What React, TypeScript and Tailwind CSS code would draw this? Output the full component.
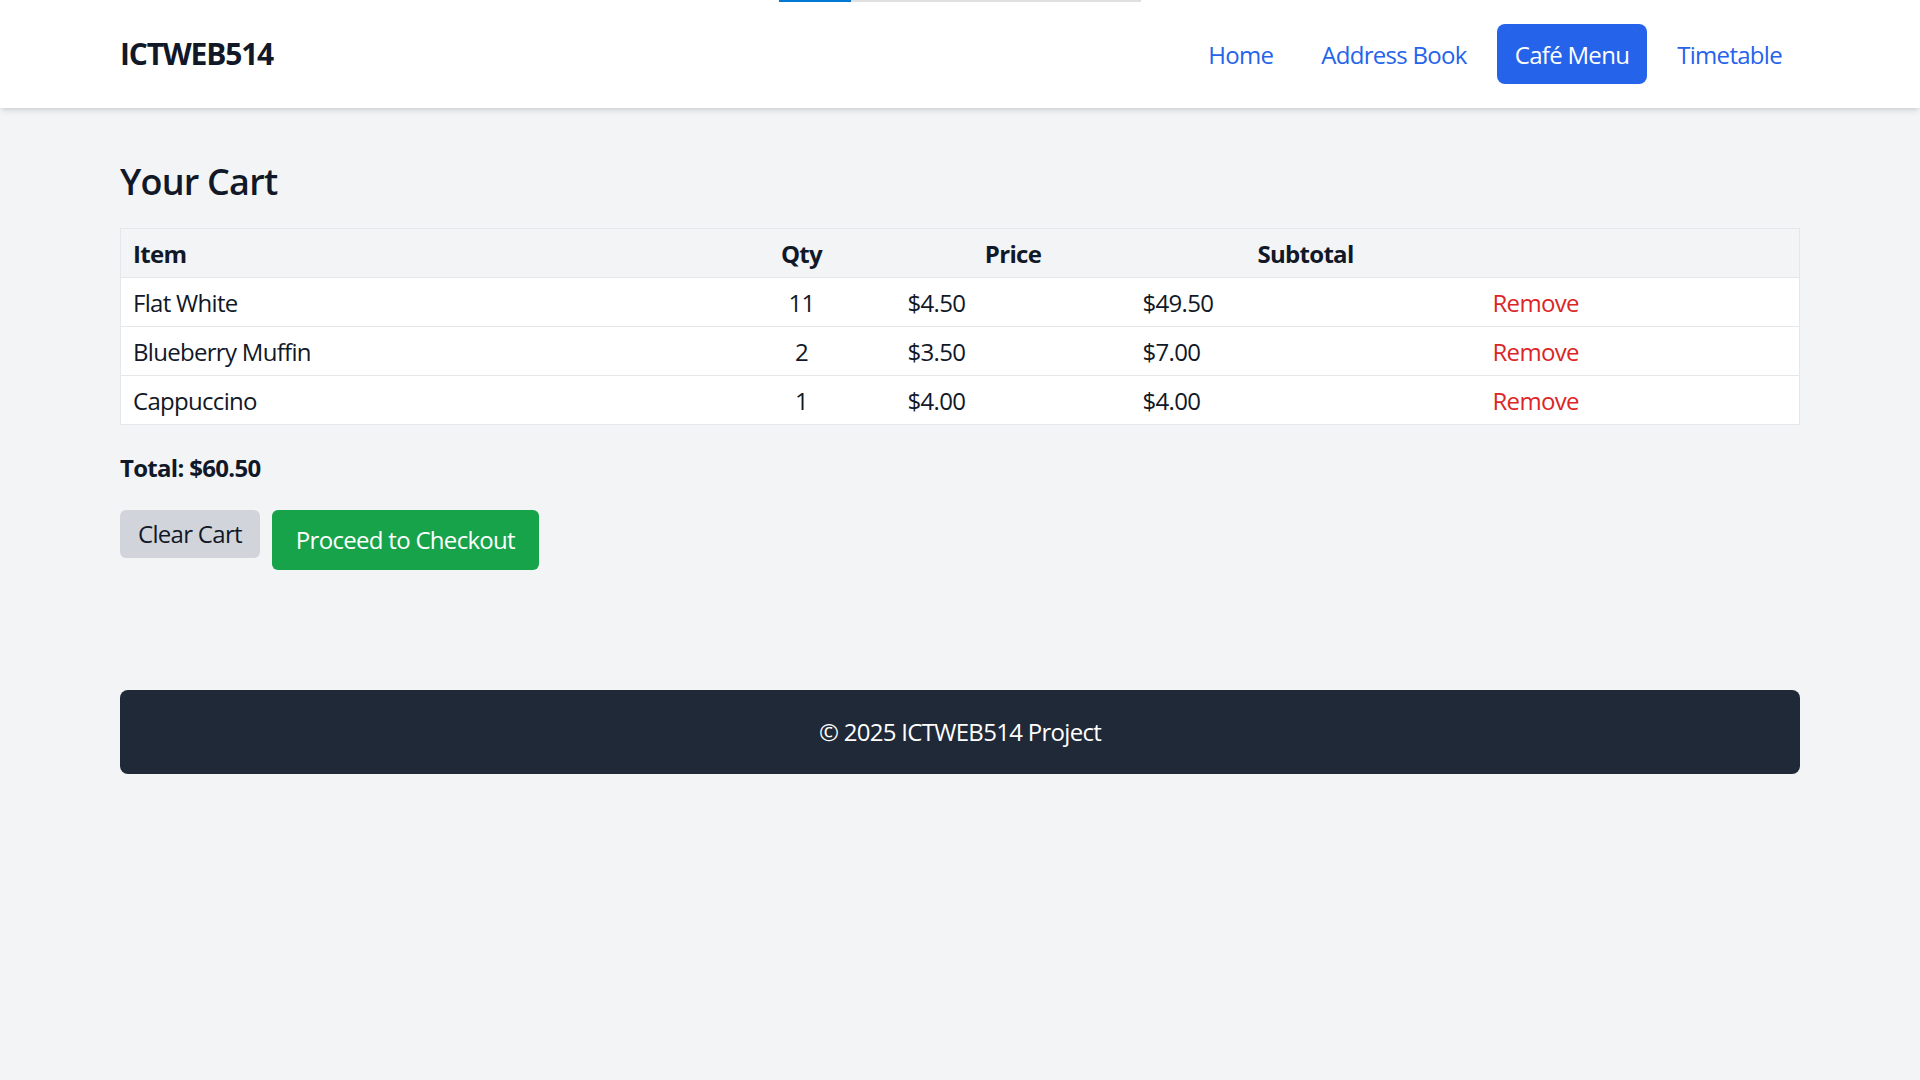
import React from 'react';

// Cart line items shown in the table
interface CartItem {
  name: string;
  qty: number;
  price: number;
}

const cart: CartItem[] = [
  { name: 'Flat White', qty: 11, price: 4.5 },
  { name: 'Blueberry Muffin', qty: 2, price: 3.5 },
  { name: 'Cappuccino', qty: 1, price: 4.0 },
];

const navLinks = [
  { label: 'Home', active: false },
  { label: 'Address Book', active: false },
  { label: 'Café Menu', active: true },
  { label: 'Timetable', active: false },
];

const money = (n: number) => `$${n.toFixed(2)}`;

const App = () => {
  const total = cart.reduce((sum, item) => sum + item.qty * item.price, 0);

  return (
    <div className="min-h-screen bg-[#f3f4f6] text-[#111827] font-['Open_Sans','Noto_Sans',sans-serif] text-[24px] leading-[36px] tracking-[-0.7px]">
      {/* Browser loading strip over the top edge */}
      <div className="fixed top-0 left-[779px] w-[362px] h-[2px] bg-[#e0e0e0] z-50">
        <div className="h-full w-[72px] bg-[#0078d4]" />
      </div>

      {/* Header */}
      <header className="bg-white shadow-md">
        <div className="mx-auto w-[1680px] flex items-center justify-between py-[24px]">
          <div className="text-[30px] leading-[42px] font-bold tracking-[-1.2px]">ICTWEB514</div>
          <nav className="flex items-center gap-[12px]">
            {navLinks.map((link) => (
              <a
                key={link.label}
                href="#"
                className={
                  link.active
                    ? 'px-[18px] pt-[13px] pb-[11px] rounded-[8px] bg-[#2563eb] text-white'
                    : 'px-[18px] pt-[13px] pb-[11px] rounded-[8px] text-[#2563eb]'
                }
              >
                {link.label}
              </a>
            ))}
          </nav>
        </div>
      </header>

      <main className="mx-auto w-[1680px] pt-[50px]">
        <h1 className="text-[36px] leading-[48px] font-semibold mb-[22px] tracking-[-0.8px]">Your Cart</h1>

        <table className="w-full table-fixed border-collapse border border-[#e5e7eb]">
          <thead className="bg-[#f3f4f6]">
            <tr>
              <th className="w-[587px] px-[12px] pt-[7px] pb-[5px] text-left font-bold">Item</th>
              <th className="w-[188px] px-[12px] pt-[7px] pb-[5px] text-center font-bold">Qty</th>
              <th className="w-[235px] px-[12px] pt-[7px] pb-[5px] text-center font-bold">Price</th>
              <th className="w-[350px] px-[12px] pt-[7px] pb-[5px] text-center font-bold">Subtotal</th>
              <th className="px-[12px] pt-[7px] pb-[5px]"></th>
            </tr>
          </thead>
          <tbody>
            {cart.map((item) => (
              <tr key={item.name} className="bg-white border-t border-[#e5e7eb]">
                <td className="px-[12px] pt-[7px] pb-[5px]">{item.name}</td>
                <td className="px-[12px] pt-[7px] pb-[5px] text-center">{item.qty}</td>
                <td className="px-[12px] pt-[7px] pb-[5px]">{money(item.price)}</td>
                <td className="px-[12px] pt-[7px] pb-[5px]">{money(item.qty * item.price)}</td>
                <td className="px-[12px] pt-[7px] pb-[5px]">
                  <button className="text-[#dc2626]">Remove</button>
                </td>
              </tr>
            ))}
          </tbody>
        </table>

        <p className="mt-[25px] font-bold">Total: {money(total)}</p>

        <div className="mt-[24px] flex items-start gap-[12px]">
          <button className="px-[18px] py-[6px] rounded-[6px] bg-[#d1d5db]">Clear Cart</button>
          <button className="px-[24px] py-[12px] rounded-[6px] bg-[#16a34a] text-white">Proceed to Checkout</button>
        </div>

        {/* Footer */}
        <footer className="mt-[120px] py-[24px] rounded-[8px] bg-[#1f2937] text-white text-center">
          © 2025 ICTWEB514 Project
        </footer>
      </main>
    </div>
  );
};

export default App;
